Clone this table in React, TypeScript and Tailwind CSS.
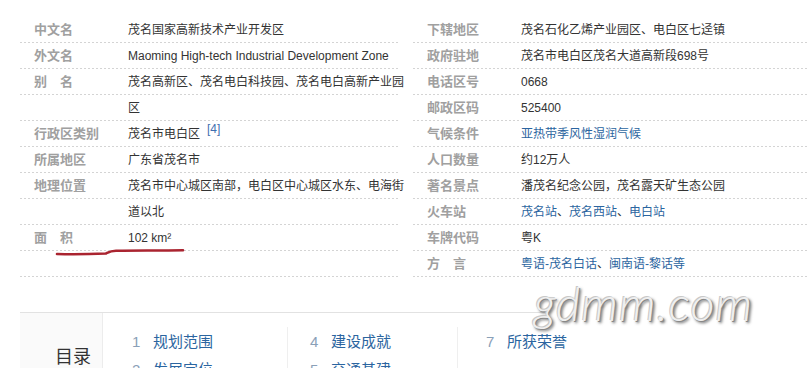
import React from "react";

type Cell = { label?: string; value?: React.ReactNode };

const link = "text-[#2b65a0]";

const left: Cell[] = [
  { label: "中文名", value: "茂名国家高新技术产业开发区" },
  { label: "外文名", value: "Maoming High-tech Industrial Development Zone" },
  { label: "别　名", value: "茂名高新区、茂名电白科技园、茂名电白高新产业园" },
  { value: "区" },
  {
    label: "行政区类别",
    value: (
      <>
        茂名市电白区
        <sup className="ml-[7px] text-[12px] text-[#3f6fb0] relative -top-[5px]">[4]</sup>
      </>
    ),
  },
  { label: "所属地区", value: "广东省茂名市" },
  { label: "地理位置", value: "茂名市中心城区南部，电白区中心城区水东、电海街" },
  { value: "道以北" },
  { label: "面　积", value: "102 km²" },
  {},
];

const right: Cell[] = [
  { label: "下辖地区", value: "茂名石化乙烯产业园区、电白区七迳镇" },
  { label: "政府驻地", value: "茂名市电白区茂名大道高新段698号" },
  { label: "电话区号", value: "0668" },
  { label: "邮政区码", value: "525400" },
  { label: "气候条件", value: <span className={link}>亚热带季风性湿润气候</span> },
  { label: "人口数量", value: "约12万人" },
  { label: "著名景点", value: "潘茂名纪念公园，茂名露天矿生态公园" },
  {
    label: "火车站",
    value: (
      <>
        <span className={link}>茂名站</span>、<span className={link}>茂名西站</span>、
        <span className={link}>电白站</span>
      </>
    ),
  },
  { label: "车牌代码", value: "粤K" },
  {
    label: "方　言",
    value: (
      <>
        <span className={link}>粤语-茂名白话</span>、<span className={link}>闽南语-黎话等</span>
      </>
    ),
  },
];

function Column({ rows, className }: { rows: Cell[]; className: string }) {
  return (
    <div className={className}>
      {rows.map((r, i) => (
        <div key={i} className="flex h-[26px] items-center relative">
          <div className="w-[108px] shrink-0 pl-[14px] text-[13px] font-bold text-[#a0a0a0]">{r.label}</div>
          <div className="text-[12px] text-[#333] whitespace-nowrap">{r.value}</div>
          <div className="absolute left-0 right-0 bottom-0 h-px bg-[linear-gradient(to_right,#d4d4d4_50%,transparent_50%)] bg-[length:4px_1px]" />
        </div>
      ))}
    </div>
  );
}

const toc = [
  [
    ["1", "规划范围"],
    ["2", "发展定位"],
  ],
  [
    ["4", "建设成就"],
    ["5", "交通基建"],
  ],
  [["7", "所获荣誉"]],
];

export default function App() {
  return (
    <div
      className="relative w-[808px] h-[368px] overflow-hidden bg-white pt-[17px]"
      style={{ fontFamily: '"Liberation Sans", "Noto Sans CJK SC", sans-serif' }}
    >
      <div className="flex">
        <Column rows={left} className="ml-[20px] w-[380px]" />
        <Column rows={right} className="ml-[13px] flex-1" />
      </div>

      {/* red pen mark under 面积 */}
      <svg className="absolute left-[54px] top-[245px]" width="134" height="14" viewBox="0 0 134 14">
        <path
          d="M3 9 C20 9.5 40 9 52 8.5 C55 7 56 6 62 5.8 C90 5.5 110 5.6 129 5.2"
          fill="none"
          stroke="#aa2430"
          strokeWidth="2.6"
          strokeLinecap="round"
        />
      </svg>

      {/* catalog */}
      <div className="ml-[20px] mt-[35px] flex border-t border-[#e2e2e2] h-[60px]">
        <div className="w-[83px] shrink-0 bg-[#fafafa] border-r border-[#ececec] pl-[35px] pt-[35px] text-[18px] leading-[18px] text-[#333]">
          目录
        </div>
        <div className="flex pt-[14px]">
          {toc.map((col, ci) => (
            <div
              key={ci}
              className={
                ci === 0
                  ? "w-[184px] pl-[29px] pt-px"
                  : ci === 1
                  ? "w-[170px] pl-[22px] border-l border-[#efefef] pt-px"
                  : "w-[170px] pl-[28px] border-l border-[#efefef] pt-px"
              }
            >
              {col.map(([n, t]) => (
                <div key={n} className="flex items-center h-[28px] text-[15px]">
                  <span className="w-[21px] text-[#8aa0b8]">{n}</span>
                  <span className="text-[#2b65a0]">{t}</span>
                </div>
              ))}
            </div>
          ))}
        </div>
      </div>

      {/* watermark */}
      <div className="absolute left-[548px] top-[281px] w-[260px] h-[54px] bg-white" />
      <div
        className="absolute left-[534px] top-[268px] text-[47px] italic font-light text-[#efefef] tracking-[1px] [text-shadow:-1px_-1px_0_#c8c8c8,1px_1px_0_#888,2px_2px_3px_#555]"
        style={{ fontFamily: "Lato, sans-serif" }}
      >
        gdmm.com
      </div>
    </div>
  );
}
